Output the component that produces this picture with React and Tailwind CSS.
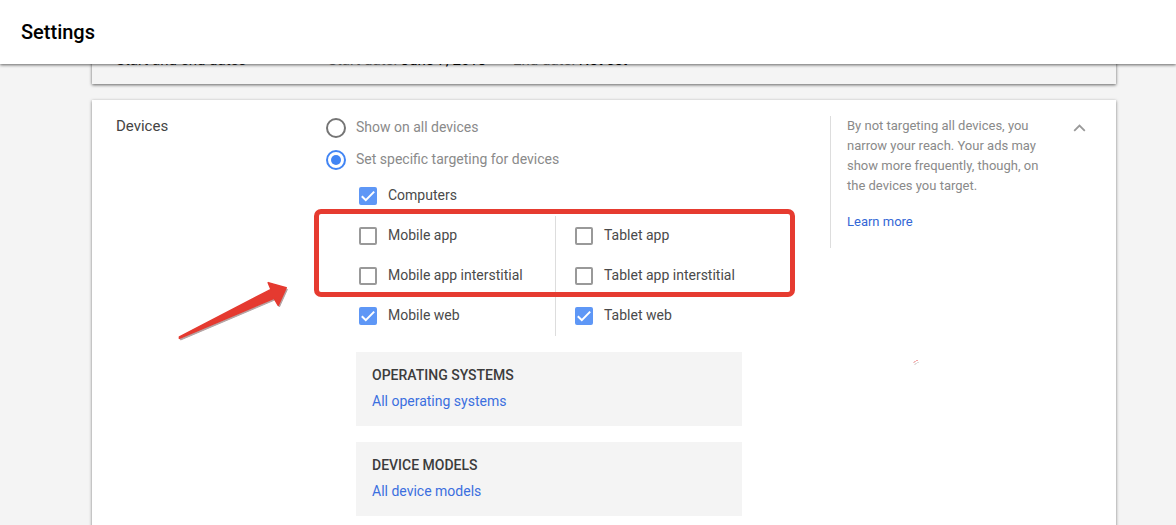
import React, { useState } from 'react';

const mobileDevices = [
  { id: 'mobile-app', label: 'Mobile app', checked: false },
  { id: 'mobile-app-interstitial', label: 'Mobile app interstitial', checked: false },
  { id: 'mobile-web', label: 'Mobile web', checked: true },
];

const tabletDevices = [
  { id: 'tablet-app', label: 'Tablet app', checked: false },
  { id: 'tablet-app-interstitial', label: 'Tablet app interstitial', checked: false },
  { id: 'tablet-web', label: 'Tablet web', checked: true },
];

const Checkbox = ({ id, label, checked }) => {
  return (
    <label htmlFor={id} className="flex h-10 items-center gap-[11px] text-[#4a4a4a]">
      <span className="grid h-[18px] w-[18px]">
        <input
          id={id}
          type="checkbox"
          defaultChecked={checked}
          className="peer col-start-1 row-start-1 h-[18px] w-[18px] appearance-none rounded-xs border-2 border-[#999] checked:border-[#5e97f6] checked:bg-[#5e97f6]"
        />
        <svg viewBox="0 0 18 18" className="pointer-events-none invisible col-start-1 row-start-1 h-[18px] w-[18px] peer-checked:visible">
          <path d="M2.8 9.2 L6.8 13.2 L15.2 4.6" fill="none" stroke="#fff" strokeWidth="2" />
        </svg>
      </span>
      <span className="pb-0.5">{label}</span>
    </label>
  );
};

const Radio = ({ value, label, selected, onSelect }) => {
  return (
    <label className="flex h-6 items-center gap-2.5 text-[#8a8a8a]">
      <span className="grid h-5 w-5 place-items-center">
        <input
          type="radio"
          name="targeting"
          value={value}
          checked={selected}
          onChange={() => onSelect(value)}
          className="peer col-start-1 row-start-1 h-5 w-5 appearance-none rounded-full border-2 border-[#757575] checked:border-[#4285f4]"
        />
        <span className="pointer-events-none invisible col-start-1 row-start-1 h-2.5 w-2.5 rounded-full bg-[#4285f4] peer-checked:visible" />
      </span>
      <span className="pb-0.5">{label}</span>
    </label>
  );
};

const Panel = ({ title, link }) => {
  return (
    <div className="mt-4 max-w-[386px] bg-[#f4f4f4] px-4 py-[11px]">
      <h3 className="font-medium leading-6 text-[#3c3c3c]">{title}</h3>
      <a href="#" className="block leading-7 text-[#3b6fdf]">{link}</a>
    </div>
  );
};

const Arrow = () => {
  return (
    <svg viewBox="0 0 116 66" className="absolute top-[62px] -left-[180px] h-[66px] w-[116px]">
      <path d="M3.4 60.4 L98 20.2 L102.2 27.4 L110.2 9.8 L92.2 4.6 L95 11.4 L3.4 58.8 Z" transform="translate(1.2 1.6)" fill="#b5a3a3" stroke="#b5a3a3" strokeLinejoin="round" />
      <path d="M3.4 60.4 L98 20.2 L102.2 27.4 L110.2 9.8 L92.2 4.6 L95 11.4 L3.4 58.8 Z" fill="#e53a30" stroke="#e53a30" strokeWidth="1.5" strokeLinejoin="round" />
    </svg>
  );
};

const DatesCard = () => {
  return (
    <section className="-mt-4 flex bg-[#f4f4f4] pb-3 pl-6 text-[15px] leading-6 shadow-[0_1px_3px_rgba(0,0,0,0.6)]">
      <h2 className="w-[212px] text-[#222]">Start and end dates</h2>
      <p className="w-[185px] text-[#777]">Start date: <span className="text-black">June 7, 2018</span></p>
      <p className="text-[#777]">End date: <span className="text-black">Not set</span></p>
    </section>
  );
};

const DevicesCard = () => {
  const [targeting, setTargeting] = useState('specific');

  return (
    <section className="mt-4 flex bg-white pt-4 pb-8 pl-6 text-[14px] leading-5 shadow-[0_1px_3px_rgba(0,0,0,0.5)]">
      <h2 className="w-[210px] shrink-0 text-[15px] text-[#444]">Devices</h2>

      <div className="min-w-0 flex-1">
        <div className="flex flex-col gap-2">
          <Radio value="all" label="Show on all devices" selected={targeting === 'all'} onSelect={setTargeting} />
          <Radio value="specific" label="Set specific targeting for devices" selected={targeting === 'specific'} onSelect={setTargeting} />
        </div>

        <div className="pt-1 pl-[30px]">
          <div className="pl-[3px]">
            <Checkbox id="computers" label="Computers" checked />
          </div>
          <div className="relative flex">
            <div className="w-[200px] border-r border-[#ddd] pl-[3px]">
              {mobileDevices.map((device) => (
                <Checkbox key={device.id} {...device} />
              ))}
            </div>
            <div className="pl-[19px]">
              {tabletDevices.map((device) => (
                <Checkbox key={device.id} {...device} />
              ))}
            </div>
            {/* highlight around the app placements */}
            <div className="pointer-events-none absolute -top-[7px] -left-[42px] h-[88px] w-[481px] rounded-[7px] border-5 border-[#e63b30]" />
            <Arrow />
          </div>

          <Panel title="OPERATING SYSTEMS" link="All operating systems" />
          <Panel title="DEVICE MODELS" link="All device models" />
        </div>
      </div>

      <aside className="relative flex w-[286px] shrink-0 items-start">
        <div className="h-[132px] w-[212px] border-l border-[#ddd] pl-4 text-[13px] leading-5 text-[#8a8a8a]">
          <p>By not targeting all devices, you narrow your reach. Your ads may show more frequently, though, on the devices you target.</p>
          <a href="#" className="mt-4 block text-[#3367d6]">Learn more</a>
        </div>
        <button type="button" aria-label="Collapse" className="ml-[25px] flex h-6 w-6 items-center justify-center">
          <svg viewBox="0 0 24 24" className="h-6 w-6">
            <path d="M7.2 14.800 L12.5 9.5 L17.800 14.800" fill="none" stroke="#999" strokeWidth="1.8" />
          </svg>
        </button>
        <svg viewBox="0 0 8 6" className="absolute top-[243px] left-[82px] h-[6px] w-[8px]">
          <rect x="4" y="1" width="2" height="1" fill="#f3a5a5" />
          <rect x="2" y="2" width="2" height="1" fill="#f3b5b5" />
          <rect x="1" y="3" width="2" height="1" fill="#f2c8c8" />
          <rect x="5" y="3" width="2" height="1" fill="#ddd" />
          <rect x="3" y="4" width="2" height="1" fill="#ddd" />
          <rect x="2" y="5" width="2" height="1" fill="#e8e0e0" />
        </svg>
      </aside>
    </section>
  );
};

const App = () => {
  return (
    <div className="flex h-screen flex-col bg-[#f4f4f4] font-[Roboto,sans-serif]">
      <header className="z-10 flex h-16 shrink-0 items-center bg-white px-[21px] shadow-[0_1px_3px_rgba(0,0,0,0.6)]">
        <h1 className="text-[20px] font-medium leading-6 text-black">Settings</h1>
      </header>
      <main className="min-h-0 flex-1 overflow-hidden pr-[60px] pl-[92px]">
        <DatesCard />
        <DevicesCard />
      </main>
    </div>
  );
};

export default App;
